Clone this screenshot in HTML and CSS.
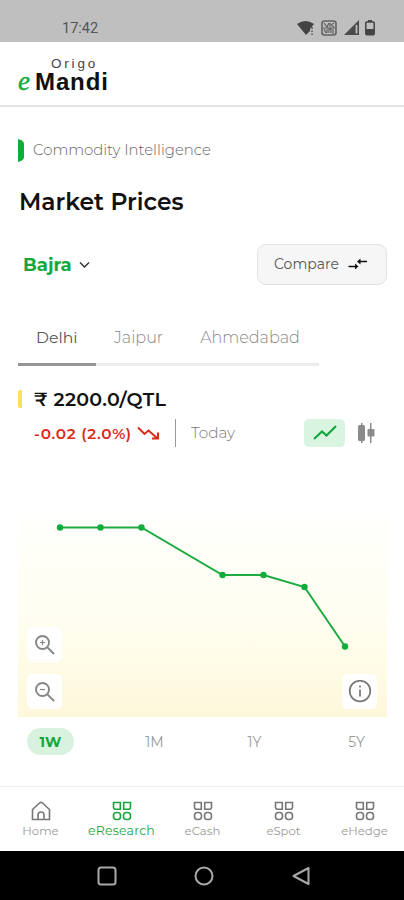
FILE: index.html
```html
<!DOCTYPE html>
<html lang="en">
<head>
  <meta charset="UTF-8">
  <meta name="viewport" content="width=device-width, initial-scale=1.0">
  <title>Origo eMandi</title>
  <link rel="stylesheet" href="styles.css">
</head>
<body>
  <div class="status-bar">
    <span class="time">17:42</span>
    <div class="status-icons">
      <svg width="18" height="16" viewBox="0 0 18 16"><path d="M0 4Q8.500-2 17 4L13 9V11L9 15Z" fill="#444"/><path d="M15 7v2M15 10.500v1.500M15 13.500v1.500" stroke="#555" stroke-width="1.500"/></svg>
      <svg width="16" height="16" viewBox="0 0 16 16" fill="none" stroke="#626262"><rect x="1" y="1" width="14" height="14" rx="2.500" stroke-width="1.600"/><path d="M3 3l3 4 2-4M9 3v4M10 5l3-2M10 5l3 2M3 9l2 4M6 9v4M8 13V9h2v4M12 9v5M2 8h12" stroke-width="1.200"/></svg>
      <svg width="15" height="15" viewBox="0 0 15 15"><path d="M0 15L15 0V15Z" fill="#4a4a4a"/><path d="M12.500 5v8.500" stroke="#bfbfbf" stroke-width="1.800"/></svg>
      <svg width="10" height="16" viewBox="0 0 10 16"><path d="M3 0h4v2H3z" fill="#444"/><rect x=".8" y="2" width="8.400" height="12.800" rx="1" fill="none" stroke="#444" stroke-width="1.500"/><path d="M1 9h8v6H1z" fill="#444"/></svg>
    </div>
  </div>

  <header>
    <div class="logo">
      <span class="logo-top">Origo</span>
      <span class="logo-main"><i>e</i><b>Mandi</b></span>
    </div>
  </header>

  <main>
    <div class="section-tag">
      <svg width="6" height="23" viewBox="0 0 6 23"><path d="M0 0L3.500 1.300Q6 2.500 6 4.500V18.500Q6 20.500 3.500 21.700L0 23Z" fill="#10ae38"/></svg>
      <span>Commodity Intelligence</span>
    </div>
    <h1>Market Prices</h1>

    <div class="commodity-row">
      <div class="commodity">
        <span>Bajra</span>
        <svg width="11" height="8" viewBox="0 0 11 8" fill="none" stroke="#333" stroke-width="1.500"><path d="M1 1.500L5.500 6L10 1.500"/></svg>
      </div>
      <button class="compare">
        <span>Compare</span>
        <svg width="20" height="12" viewBox="0 0 20 12" fill="none" stroke="#111" stroke-width="1.700"><path d="M19 3.500H11M0.500 8.500H8"/><path d="M12.500 0.500L9 3.500L12.500 6.500ZM7 5.500L10.500 8.500L7 11.500Z" fill="#111" stroke="none"/></svg>
      </button>
    </div>

    <div class="tabs">
      <div class="tab active">Delhi</div>
      <div class="tab">Jaipur</div>
      <div class="tab">Ahmedabad</div>
    </div>

    <div class="price"><span>₹ 2200.0/QTL</span></div>
    <div class="change-row">
      <span class="change">-0.02 (2.0%)</span>
      <svg class="trend" width="23" height="14" viewBox="0 0 23 14" fill="none" stroke="#d92a1c" stroke-width="2"><path d="M1 1.500L7.500 8L11.500 4.500L20 12M21 6.500V12.500H15"/></svg>
      <span class="today">Today</span>
      <div class="chart-types">
        <div class="line-type">
          <svg width="24" height="16" viewBox="0 0 24 16" fill="none" stroke="#12a83b" stroke-width="2.200"><path d="M1 14L9 6.500L13.500 10.500L23 1"/></svg>
        </div>
        <svg width="18" height="20" viewBox="0 0 18 20" fill="#8b8b8b"><path d="M4 0h1.500v20H4zM13 0h1.500v20H13z"/><rect x="1" y="2" width="7" height="16" rx="1.500"/><rect x="10.500" y="6" width="7" height="7.500" rx="1"/></svg>
      </div>
    </div>

    <div class="chart">
      <svg class="plot" width="369" height="207" viewBox="0 0 369 207">
        <polyline points="42,17.500 82.500,17.500 123.500,17.500 204.500,65 245.500,65 286.500,77 327,136.500" fill="none" stroke="#1cab40" stroke-width="2"/>
        <g fill="#10ad3c">
          <circle cx="42" cy="17.500" r="3.200"/>
          <circle cx="82.500" cy="17.500" r="3.200"/>
          <circle cx="123.500" cy="17.500" r="3.200"/>
          <circle cx="204.500" cy="65" r="3.200"/>
          <circle cx="245.500" cy="65" r="3.200"/>
          <circle cx="286.500" cy="77" r="3.200"/>
          <circle cx="327" cy="136.500" r="3.200"/>
        </g>
      </svg>
      <div class="chart-tools">
        <div class="zoom-tools">
          <div class="tool"><svg width="20" height="20" viewBox="0 0 20 20" fill="none" stroke="#858585" stroke-width="1.900"><circle cx="7.500" cy="7.500" r="6.500"/><path d="M12.200 12.200L19 19"/><path d="M5 7.500h5M7.500 5v5" stroke-width="1.200"/></svg></div>
          <div class="tool"><svg width="20" height="20" viewBox="0 0 20 20" fill="none" stroke="#858585" stroke-width="1.900"><circle cx="7.500" cy="7.500" r="6.500"/><path d="M12.200 12.200L19 19"/><path d="M5 7.500h5" stroke-width="1.200"/></svg></div>
        </div>
        <div class="tool"><svg width="24" height="24" viewBox="0 0 24 24" fill="none" stroke="#777" stroke-width="1.700"><circle cx="12" cy="11" r="10.300"/><path d="M12 9.500V16.500M12 5.500v2"/></svg></div>
      </div>
    </div>

    <div class="ranges">
      <span class="range active">1W</span>
      <span class="range">1M</span>
      <span class="range">1Y</span>
      <span class="range">5Y</span>
    </div>
  </main>

  <svg width="0" height="0" class="defs">
    <symbol id="grid" viewBox="0 0 20 20"><g fill="none" stroke="currentColor" stroke-width="1.600"><path d="M1.500 1.500H8.300V8.300H3.800Q1.500 8.300 1.500 6ZM11.700 1.500H18.500V6Q18.500 8.300 16.200 8.300H11.700Z"/><rect x="1.500" y="11.500" width="7" height="7" rx="3"/><rect x="11.500" y="11.500" width="7" height="7" rx="3"/></g></symbol>
  </svg>
  <nav>
    <a class="nav-item">
      <svg width="20" height="20" viewBox="0 0 20 20" fill="none" stroke="currentColor" stroke-width="1.600"><path d="M1.500 8.500L8.500 2Q10 .8 11.500 2L18.500 8.500V18.500H1.500Z"/><path d="M7 18.500V14a3 3 0 0 1 6 0V18.500"/></svg>
      <span>Home</span>
    </a>
    <a class="nav-item active"><svg width="20" height="20"><use href="#grid"/></svg><span>eResearch</span></a>
    <a class="nav-item"><svg width="20" height="20"><use href="#grid"/></svg><span>eCash</span></a>
    <a class="nav-item"><svg width="20" height="20"><use href="#grid"/></svg><span>eSpot</span></a>
    <a class="nav-item"><svg width="20" height="20"><use href="#grid"/></svg><span>eHedge</span></a>
  </nav>

  <div class="system-bar">
    <svg width="20" height="20" viewBox="0 0 20 20"><rect x="1.500" y="1.500" width="17" height="17" rx="2.500"/></svg>
    <svg width="20" height="20" viewBox="0 0 20 20"><circle cx="10" cy="10" r="8.500"/></svg>
    <svg width="20" height="20" viewBox="0 0 20 20"><path d="M17.500 2V18L2.500 10Z" stroke-linejoin="round"/></svg>
  </div>
</body>
</html>
```

FILE: styles.css
```css
* {
  box-sizing: border-box;
}

body {
  margin: 0;
  height: 900px;
  display: flex;
  flex-direction: column;
  overflow: hidden;
  font-family: Montserrat, Inter, sans-serif;
  background-color: #fff;
  color: #111;
}

svg {
  display: block;
  flex-shrink: 0;
}

.status-bar {
  height: 42px;
  padding: 13px 28px 0 62px;
  display: flex;
  justify-content: space-between;
  background-color: #bfbfbf;
}

.time {
  font: 14.5px/31px Roboto, sans-serif;
  color: #555;
}

.status-icons {
  display: flex;
  align-items: center;
  gap: 6.5px;
  padding-right: 1px;
}

header {
  height: 65px;
  padding: 14px 18px 0;
  border-bottom: 2px solid #e4e4e4;
}

.logo {
  display: flex;
  flex-direction: column;
  width: 92px;
  font-family: "Liberation Sans", sans-serif;
}

.logo-top {
  padding-left: 33px;
  font-size: 13.5px;
  line-height: 15px;
  letter-spacing: 2.8px;
  color: #444;
}

.logo-main {
  display: flex;
  align-items: baseline;
  gap: 5px;
  font-size: 24px;
  line-height: 22px;
}

.logo-main b {
  letter-spacing: 0.9px;
}

.logo-main i {
  font-family: "Liberation Serif", serif;
  font-size: 27px;
  line-height: 18px;
  color: #17ad3b;
  -webkit-text-stroke: 0.5px #17ad3b;
}

main {
  padding: 32px 17px 0 18px;
}

.section-tag {
  height: 23px;
  display: flex;
  align-items: center;
  gap: 9px;
  font-size: 14.9px;
  line-height: 21px;
  font-weight: 300;
  color: #666;
}

h1 {
  margin: 24px 0 0 1px;
  font-size: 23.4px;
  line-height: 31px;
  font-weight: 600;
}

.commodity-row {
  margin-top: 27px;
  height: 41px;
  display: flex;
  align-items: center;
  justify-content: space-between;
}

.commodity {
  display: flex;
  align-items: center;
  gap: 7px;
  padding-left: 5px;
  font-size: 18px;
  font-weight: 700;
  color: #14a93a;
}

.compare {
  width: 130px;
  height: 41px;
  padding: 0 18px 1px 16px;
  display: flex;
  align-items: center;
  justify-content: space-between;
  border: 1px solid #e3e3e3;
  border-radius: 9px;
  background-color: #f6f6f6;
  font-family: inherit;
  font-size: 14px;
  color: #555;
}

.tabs {
  width: 301px;
  margin-top: 33px;
  height: 48px;
  display: flex;
  border-bottom: 3px solid #ececec;
}

.tab {
  height: 48px;
  padding: 9px 19px 0 18px;
  font-size: 16px;
  font-weight: 300;
  line-height: 22px;
  color: #888;
}

.tab.active {
  width: 78px;
  border-bottom: 3px solid #959595;
  font-size: 15.7px;
  font-weight: 400;
  color: #555;
}

.price {
  margin-top: 24px;
  height: 18px;
  padding-left: 12px;
  border-left: 4px solid #fbe05c;
  border-radius: 2px;
  font-size: 19px;
  line-height: 19px;
  font-weight: 600;
  letter-spacing: 0.3px;
}

.change-row {
  margin-top: 11px;
  height: 28px;
  padding-left: 16px;
  display: flex;
  align-items: center;
}

.change {
  width: 98px;
  font-size: 15.3px;
  font-weight: 600;
  letter-spacing: 0.7px;
  white-space: nowrap;
  color: #d92a1c;
}

.trend {
  margin-left: 5px;
}

.today {
  margin-left: 15px;
  padding-left: 15px;
  border-left: 1px solid #999;
  font-size: 15.2px;
  line-height: 28px;
  font-weight: 300;
  color: #777;
}

.chart-types {
  margin-left: auto;
  padding-right: 12px;
  display: flex;
  align-items: center;
  gap: 12px;
}

.line-type {
  width: 41px;
  height: 28px;
  display: grid;
  place-items: center;
  border-radius: 5px;
  background-color: #daf4e2;
}

.chart {
  display: grid;
  width: 369px;
  height: 207px;
  margin-top: 63px;
  background: linear-gradient(#fffffd, #fffef1 50%, #fef8db);
}

.plot,
.chart-tools {
  grid-area: 1 / 1;
}

.chart-tools {
  display: flex;
  align-items: flex-end;
  justify-content: space-between;
  padding: 0 10px 8px 9px;
}

.zoom-tools {
  display: grid;
  gap: 12px;
}

.tool {
  width: 35px;
  height: 35px;
  display: grid;
  place-items: center;
  border-radius: 5px;
  background-color: #fff;
}

.ranges {
  margin-top: 11px;
  height: 27px;
  padding: 0 7px 0 9px;
  display: flex;
  justify-content: space-between;
}

.range {
  width: 47px;
  font-size: 14px;
  line-height: 28px;
  font-weight: 400;
  text-align: center;
  color: #999;
}

.range:nth-child(2) {
  padding-left: 4px;
}

.range.active {
  border-radius: 14px;
  background-color: #d9f2df;
  font-weight: 700;
  color: #15a53a;
}

.defs {
  position: absolute;
}

nav {
  margin-top: auto;
  height: 65px;
  padding-top: 14px;
  flex-shrink: 0;
  display: grid;
  grid-template-columns: repeat(5, 81px);
  border-top: 1px solid #eee;
}

.nav-item {
  display: flex;
  flex-direction: column;
  align-items: center;
  gap: 2px;
  font-size: 11.7px;
  line-height: 16px;
  font-weight: 400;
  color: #777;
}

.nav-item span {
  color: #999;
}

.nav-item.active,
.nav-item.active span {
  color: #18a63c;
}

.nav-item.active span {
  font-size: 12.5px;
  letter-spacing: 0.2px;
}

.system-bar {
  height: 49px;
  flex-shrink: 0;
  display: flex;
  align-items: center;
  justify-content: center;
  gap: 77px;
  padding-left: 3px;
  background-color: #000;
}

.system-bar svg {
  fill: none;
  stroke: #a9a9a9;
  stroke-width: 2;
}
```
